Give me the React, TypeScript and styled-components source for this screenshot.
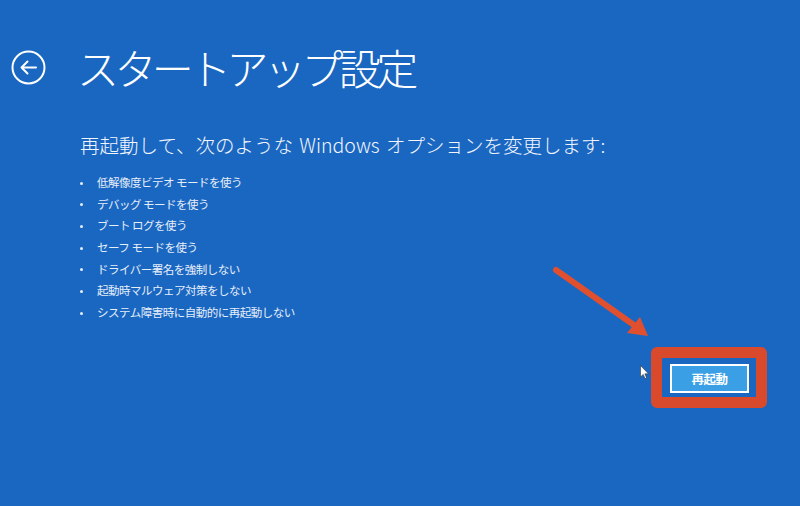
import React from "react";
import styled, { createGlobalStyle } from "styled-components";

const GlobalStyle = createGlobalStyle`
  html, body {
    margin: 0;
    padding: 0;
    background: #1a67c2;
  }
  * { box-sizing: border-box; }
`;

const Screen = styled.div`
  position: relative;
  width: 800px;
  height: 506px;
  overflow: hidden;
  background: #1a67c2;
  color: #ffffff;
  font-family: "Noto Sans CJK JP", "Noto Sans", sans-serif;
  display: flex;
  flex-direction: column;
  padding-top: 42px;
`;

const Header = styled.header`
  display: flex;
  align-items: center;
  height: 50px;
  padding-left: 11px;
  gap: 31px;
`;

const BackButton = styled.button`
  width: 35px;
  height: 35px;
  padding: 0;
  border: none;
  background: transparent;
  display: flex;
  align-items: center;
  justify-content: center;
  cursor: pointer;
`;

const Title = styled.h1`
  margin: 0;
  font-size: 42px;
  line-height: 50px;
  font-weight: 300;
  letter-spacing: -4.6px;
  color: #ffffff;
`;

const Content = styled.main`
  display: flex;
  flex-direction: column;
  padding-left: 80px;
`;

const Subtitle = styled.p`
  margin: 41px 0 0;
  font-size: 19.5px;
  line-height: 24px;
  font-weight: 300;
  color: #f2f6fc;
  letter-spacing: 0;
  word-spacing: 2px;
`;

const OptionList = styled.ul`
  list-style: none;
  margin: 15px 0 0;
  padding: 0;
  display: flex;
  flex-direction: column;
`;

const OptionItem = styled.li`
  position: relative;
  padding-left: 17px;
  height: 21.7px;
  line-height: 21.7px;
  font-size: 11.5px;
  letter-spacing: -0.5px;
  color: #e6eef8;
  &::before {
    content: "";
    position: absolute;
    left: 0;
    top: 9.5px;
    width: 3px;
    height: 3px;
    border-radius: 50%;
    background: #e6eef8;
  }
`;

const Actions = styled.div`
  display: flex;
  justify-content: flex-end;
  padding-right: 33px;
  margin-top: 23px;
`;

const Highlight = styled.div`
  border: 11px solid #d94a2d;
  border-radius: 6px;
  padding: 6px 7px 4px 8px;
  background: #1a67c2;
`;

const RestartButton = styled.button`
  width: 79px;
  height: 29px;
  border: 2px solid #ffffff;
  background: #3b9fe6;
  color: #ffffff;
  font-family: "Noto Sans CJK JP", "Noto Sans", sans-serif;
  font-size: 12.5px;
  font-weight: 700;
  letter-spacing: -0.5px;
  padding: 0;
  cursor: pointer;
`;

const Annotation = styled.svg`
  position: absolute;
  left: 0;
  top: 0;
  pointer-events: none;
`;

const options = [
  "低解像度ビデオ モードを使う",
  "デバッグ モードを使う",
  "ブート ログを使う",
  "セーフ モードを使う",
  "ドライバー署名を強制しない",
  "起動時マルウェア対策をしない",
  "システム障害時に自動的に再起動しない",
];

export default function App() {
  return (
    <>
      <GlobalStyle />
      <Screen>
        <Header>
          <BackButton aria-label="戻る">
            <svg width="35" height="35" viewBox="0 0 35 35" fill="none">
              <circle cx="17.5" cy="17.5" r="16" stroke="#ffffff" strokeWidth="2" />
              <path
                d="M25 17.5H10.5M16.5 11.5L10.5 17.5L16.5 23.5"
                stroke="#ffffff"
                strokeWidth="2"
                strokeLinecap="round"
                strokeLinejoin="round"
              />
            </svg>
          </BackButton>
          <Title>スタートアップ設定</Title>
        </Header>
        <Content>
          <Subtitle>再起動して、次のような Windows オプションを変更します:</Subtitle>
          <OptionList>
            {options.map((o) => (
              <OptionItem key={o}>{o}</OptionItem>
            ))}
          </OptionList>
        </Content>
        <Actions>
          <Highlight>
            <RestartButton>再起動</RestartButton>
          </Highlight>
        </Actions>
        <Annotation width="800" height="506" viewBox="0 0 800 506">
          <line
            x1="556"
            y1="270"
            x2="641"
            y2="330"
            stroke="#e0502f"
            strokeWidth="6"
            strokeLinecap="round"
          />
          <polygon points="648,336 627,333 640,317" fill="#e0502f" />
          <path
            d="M640.5 365.5 L640.5 377 L643.2 374.4 L645 378.6 L646.6 377.9 L644.9 373.8 L648.5 373.8 Z"
            fill="#ffffff"
            stroke="#333333"
            strokeWidth="0.6"
          />
        </Annotation>
      </Screen>
    </>
  );
}
